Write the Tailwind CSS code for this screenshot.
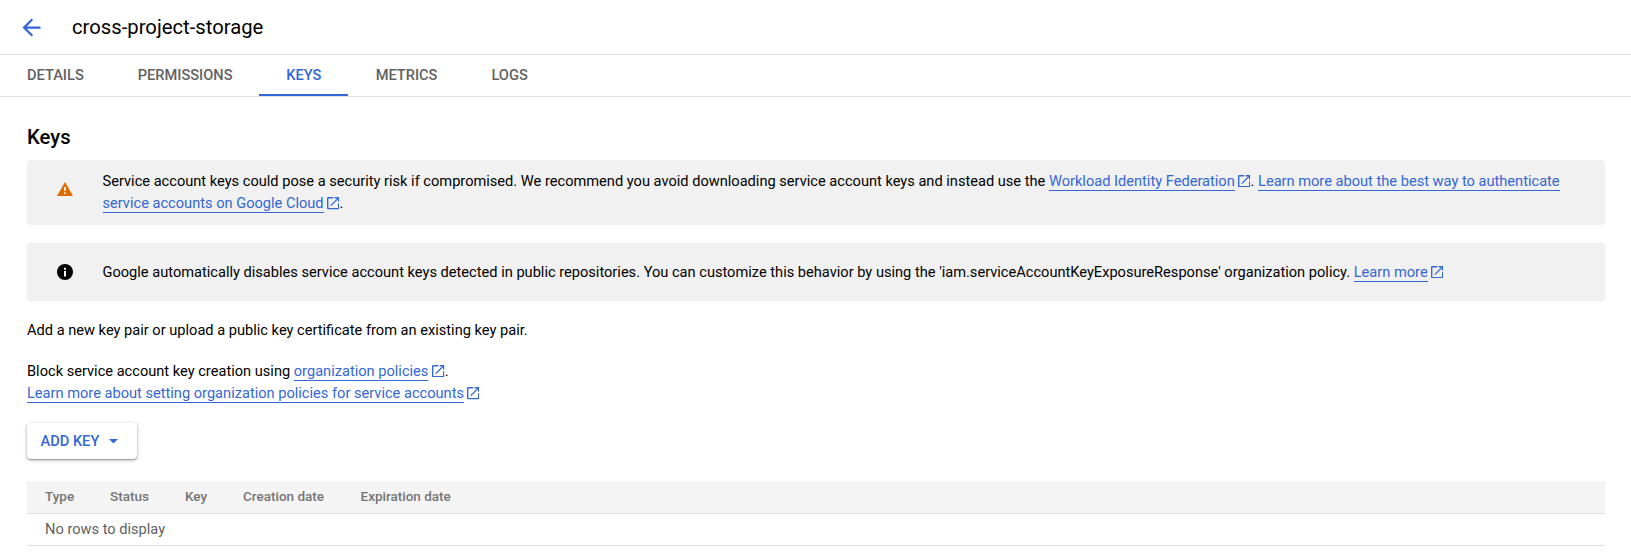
<!DOCTYPE html>
<html lang="en">
<head>
<meta charset="utf-8">
<title>cross-project-storage</title>
<script src="https://cdn.jsdelivr.net/npm/@tailwindcss/browser@4"></script>
</head>
<body class="bg-white font-['Roboto',sans-serif] text-[14.625px] leading-[22.5px] text-black">
<svg class="hidden"><symbol id="ext" viewBox="3 3 18 18"><path d="M19 19H5V5h7V3H5a2 2 0 0 0-2 2v14a2 2 0 0 0 2 2h14c1.1 0 2-.9 2-2v-7h-2v7zM14 3v2h3.59l-9.83 9.83 1.41 1.41L19 6.41V10h2V3h-7z"/></symbol></svg>

<header class="flex h-[55px] items-center border-b border-[#e0e0e0] pl-[18px]">
  <svg class="size-[27px] fill-[#3367d6]" viewBox="0 0 24 24"><path d="M20 11H7.83l5.59-5.59L12 4l-8 8 8 8 1.41-1.41L7.83 13H20v-2z"/></svg>
  <h1 class="ml-[27px] text-[20.25px]">cross-project-storage</h1>
</header>

<nav class="flex h-[42px] border-b border-[#e0e0e0] font-medium leading-[40px] text-[#616161]">
  <a class="px-[27px]">DETAILS</a>
  <a class="pl-[27px] pr-[26.4px]">PERMISSIONS</a>
  <a class="border-b-2 border-[#3367d6] pl-[27.4px] pr-[26.6px] text-[#3367d6]">KEYS</a>
  <a class="pl-[27.6px] pr-[27px]">METRICS</a>
  <a class="px-[27px]">LOGS</a>
</nav>

<main class="pl-[27px] pr-[26px] pt-[27px]">
  <h2 class="text-[20.25px] font-medium leading-[27px]">Keys</h2>

  <div class="mt-[9px] flex h-[65px] items-center rounded-[4px] bg-[#f1f1f1] pb-px pl-[29px] pr-[18px]">
    <svg class="mb-[7px] size-[18px] shrink-0 fill-[#dd6b00]" viewBox="0 0 18 18"><path d="M9 2L1 16h16L9 2zM8.1 7.1h1.8v3.9H8.1V7.1zm0 5.1h1.8V14H8.1v-1.8z"/></svg>
    <p class="ml-[28.5px]">Service account keys could pose a security risk if compromised. We recommend you avoid downloading service account keys and instead use the <a class="border-b border-[#3367d6] text-[#3367d6]">Workload Identity Federation</a><svg class="ml-[3px] mr-[0.4px] inline-block size-[12.4px] align-[-1.5px] fill-[#3367d6]"><use href="#ext"/></svg>. <a class="border-b border-[#3367d6] text-[#3367d6]">Learn more about the best way to authenticate service accounts on Google Cloud</a><svg class="ml-[3px] mr-[0.4px] inline-block size-[12.4px] align-[-1.5px] fill-[#3367d6]"><use href="#ext"/></svg>.</p>
  </div>

  <div class="mt-[18px] flex h-[58px] items-center rounded-[4px] bg-[#f1f1f1] pl-[29px] pr-[18px]">
    <svg class="size-[18px] shrink-0" viewBox="0 0 18 18"><circle cx="9" cy="9" r="8"/><path fill="#fff" d="M8 4.8h2v2H8zM8 8h2v5.4H8z"/></svg>
    <p class="ml-[28.5px]">Google automatically disables service account keys detected in public repositories. You can customize this behavior by using the 'iam.serviceAccountKeyExposureResponse' organization policy. <a class="border-b border-[#3367d6] text-[#3367d6]">Learn more</a><svg class="ml-[3px] inline-block size-[12.4px] align-[-1.5px] fill-[#3367d6]"><use href="#ext"/></svg></p>
  </div>

  <p class="mt-[18px]">Add a new key pair or upload a public key certificate from an existing key pair.</p>
  <p class="mt-[18px]">Block service account key creation using <a class="border-b border-[#3367d6] text-[#3367d6]">organization policies</a><svg class="ml-[4px] inline-block size-[12.4px] align-[-1.5px] fill-[#3367d6]"><use href="#ext"/></svg>.<br><a class="border-b border-[#3367d6] text-[#3367d6]">Learn more about setting organization policies for service accounts</a><svg class="ml-[3px] inline-block size-[12.4px] align-[-1.5px] fill-[#3367d6]"><use href="#ext"/></svg></p>

  <button class="mt-[18px] flex h-[36px] w-[110px] items-center rounded-[4px] bg-white pl-[13.5px] pt-px font-medium text-[#3367d6] shadow-[0_1px_2px_rgba(0,0,0,0.4),0_1px_5px_rgba(0,0,0,0.15)]">ADD KEY<svg class="ml-[10px] h-[4.5px] w-[9px] fill-[#3367d6]" viewBox="0 0 10 5"><path d="M0 0h10L5 5z"/></svg></button>

  <table class="mt-[22.5px] w-full border-collapse text-left text-[#616161]">
    <thead>
      <tr class="h-[32px] border-b border-[#e0e0e0] bg-[#f4f4f4] text-[13.5px] text-[#757575]">
        <th class="w-[65px] p-0 pb-px pl-[18px] font-medium">Type</th>
        <th class="w-[75px] p-0 pb-px pl-[18px] font-medium">Status</th>
        <th class="w-[58px] p-0 pb-px pl-[18px] font-medium">Key</th>
        <th class="w-[117.5px] p-0 pb-px pl-[18px] font-medium">Creation date</th>
        <th class="p-0 pb-px pl-[18px] font-medium">Expiration date</th>
      </tr>
    </thead>
    <tbody>
      <tr class="h-[32px] border-b border-[#e0e0e0]"><td colspan="5" class="p-0 pl-[18px]">No rows to display</td></tr>
    </tbody>
  </table>
</main>
</body>
</html>
